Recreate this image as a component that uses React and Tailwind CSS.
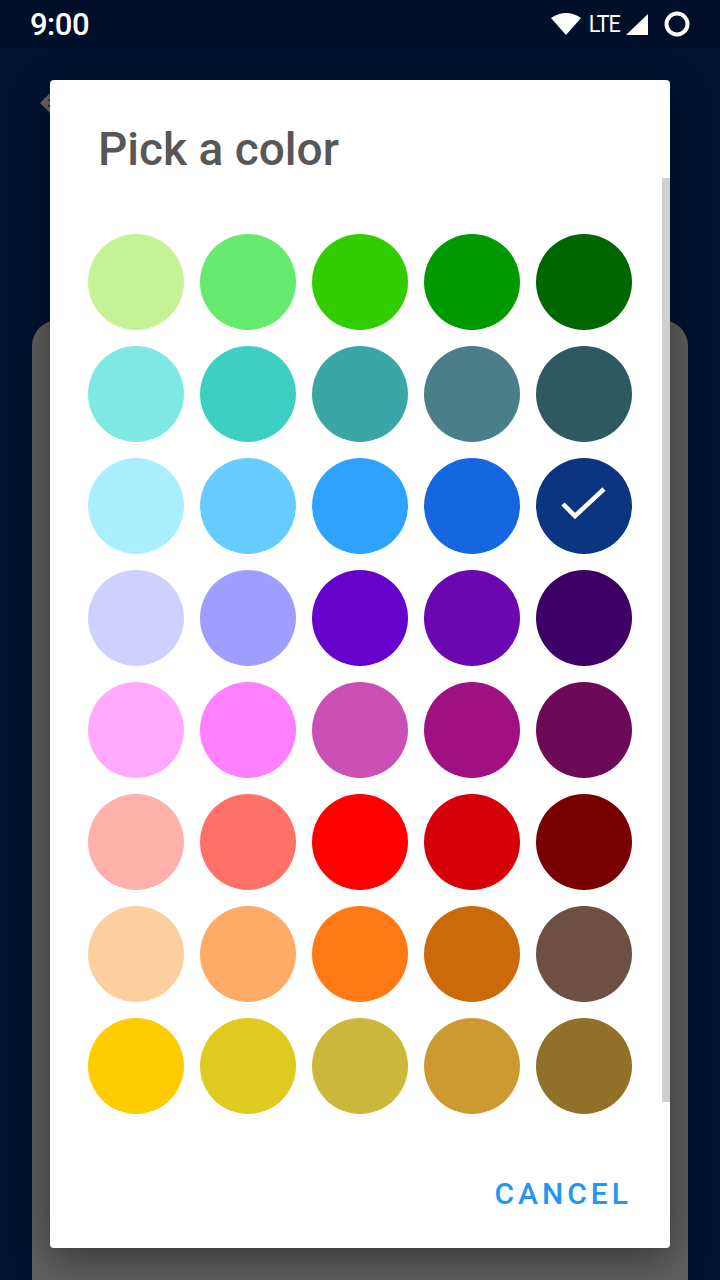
import * as React from 'react';

const colors = [
  ['#c5f294', '#66ea6e', '#33cc00', '#009900', '#006600'],
  ['#7fe8e3', '#3ecfc3', '#3aa6a6', '#4a7f8a', '#2f5961'],
  ['#aaeeff', '#66ccff', '#2ea2ff', '#1566e0', '#0b3580'],
  ['#cfd0ff', '#9e9eff', '#6600cc', '#6a07b0', '#3d0066'],
  ['#ffaaff', '#ff80ff', '#cc4fb6', '#a11080', '#6d0a57'],
  ['#ffb0aa', '#ff7066', '#ff0000', '#d50008', '#790000'],
  ['#fdcf9e', '#ffaa66', '#ff7a15', '#cc6a0a', '#6d4f43'],
  ['#ffcc00', '#dfca20', '#ccb73a', '#cc9933', '#917128'],
];

const selected = '#0b3580';

function StatusBar() {
  return (
    <div className="h-[48px] bg-[#020f29] flex items-center justify-between pl-[30px] pr-[30px] text-white">
      <span className="text-[31px] leading-none font-medium tracking-[-0.5px]">9:00</span>
      <div className="flex items-center">
        <svg width="32" height="24" viewBox="0 0 32 24">
          <path d="M1 6 Q16 -4 31 6 L16 23 Z" fill="white" />
        </svg>
        <span className="ml-[5px] text-[24px] leading-none tracking-[-1px] scale-x-90">LTE</span>
        <svg width="22" height="21" viewBox="0 0 22 21" className="ml-[4px]">
          <path d="M22 0 L22 21 L0 21 Z" fill="white" />
        </svg>
        <svg width="26" height="26" viewBox="0 0 26 26" className="ml-[16px]">
          <circle cx="13" cy="13" r="10.5" fill="none" stroke="white" strokeWidth="4" />
        </svg>
      </div>
    </div>
  );
}

function Swatch({ color }) {
  return (
    <div className="w-[112px] h-[112px] flex items-center justify-center">
      <div className="w-[96px] h-[96px] rounded-full flex items-center justify-center" style={{ backgroundColor: color }}>
        {color === selected && (
          <svg width="48" height="40" viewBox="0 0 48 40">
            <polyline points="3,18 15,30 44,3" fill="none" stroke="white" strokeWidth="4.5" />
          </svg>
        )}
      </div>
    </div>
  );
}

export default function App() {
  return (
    <div className="relative w-[720px] h-[1280px] overflow-hidden bg-[#021432] flex flex-col" style={{ fontFamily: 'Roboto, "Liberation Sans", sans-serif' }}>
      <StatusBar />
      <div className="pl-[32px] pt-[31px]">
        <svg width="48" height="48" viewBox="0 0 24 24">
          <path d="M20 11H7.83l5.59-5.59L12 4l-8 8 8 8 1.41-1.41L7.83 13H20v-2z" fill="#686868" />
        </svg>
      </div>
      <div className="flex-1 mx-[32px] mt-[193px] rounded-t-[26px] bg-[#606060]" />

      <div className="absolute left-[50px] top-[80px] w-[620px] h-[1168px] bg-white rounded-[4px] shadow-[0_10px_40px_rgba(0,0,0,0.45)] flex flex-col">
        <h1 className="pl-[48px] pt-[42px] text-[46px] leading-[54px] font-medium text-[#575757]">Pick a color</h1>
        <div className="relative mt-[2px] flex-1">
          <div className="absolute right-0 top-0 w-[8px] h-[924px] bg-[#cfcfcf]" />
          <div className="pl-[30px] pt-[48px] grid grid-cols-[repeat(5,112px)]">
            {colors.flat().map((c, i) => (
              <Swatch key={i} color={c} />
            ))}
          </div>
        </div>
        <div className="flex justify-end pr-[38px] pb-[36px]">
          <button className="text-[30px] leading-[36px] font-medium tracking-[4px] text-[#2196f3]">CANCEL</button>
        </div>
      </div>
    </div>
  );
}
